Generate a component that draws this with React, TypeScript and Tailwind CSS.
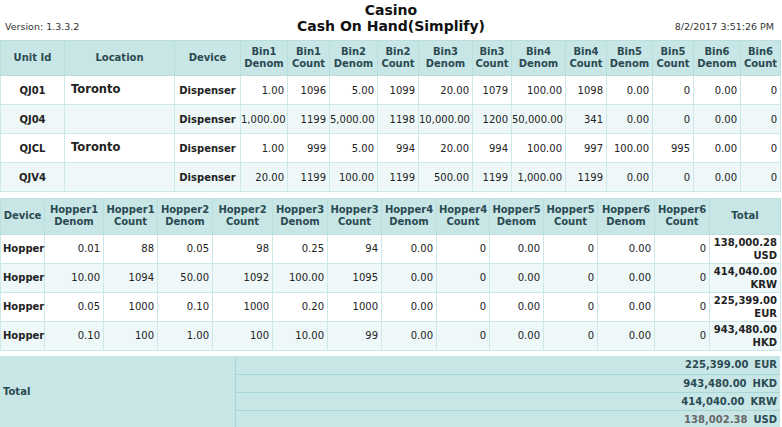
import React from "react";

const top = [
  ["QJ01", "Toronto", "1.00", "1096", "5.00", "1099", "20.00", "1079", "100.00", "1098", "0.00", "0", "0.00", "0"],
  ["QJ04", "", "1,000.00", "1199", "5,000.00", "1198", "10,000.00", "1200", "50,000.00", "341", "0.00", "0", "0.00", "0"],
  ["QJCL", "Toronto", "1.00", "999", "5.00", "994", "20.00", "994", "100.00", "997", "100.00", "995", "0.00", "0"],
  ["QJV4", "", "20.00", "1199", "100.00", "1199", "500.00", "1199", "1,000.00", "1199", "0.00", "0", "0.00", "0"],
];
const topW = [64, 110, 66, 47, 42, 48, 41, 54, 39, 54, 41, 46, 41, 47, 40];
const bot = [
  ["0.01", "88", "0.05", "98", "0.25", "94", "138,000.28", "USD"],
  ["10.00", "1094", "50.00", "1092", "100.00", "1095", "414,040.00", "KRW"],
  ["0.05", "1000", "0.10", "1000", "0.20", "1000", "225,399.00", "EUR"],
  ["0.10", "100", "1.00", "100", "10.00", "99", "943,480.00", "HKD"],
];
const botW = [44, 59, 54, 55, 60, 55, 54, 55, 53, 54, 54, 57, 55, 71];

const th = "border border-[#b8dede] bg-[#c8e6e6] text-[#2b4a52] font-bold text-center leading-[12px] px-[1px] text-[10px]";
const cell = "border border-[#cde8e8] text-[#222] text-[10px]";
const num = cell + " text-right pr-[3px]";

export default function App() {
  return (
    <div className="w-[782px] h-[427px] overflow-hidden bg-white text-[10px] text-[#222]" style={{ fontFamily: '"DejaVu Sans", Verdana, sans-serif' }}>
      <div className="relative h-[40px]">
        <div className="absolute left-[5px] top-[20px] text-[9.5px] text-[#333]">Version: 1.3.3.2</div>
        <div className="text-center font-bold text-[14px] leading-[16px] pt-[2px] text-[#111]">
          <div>Casino</div>
          <div>Cash On Hand(Simplify)</div>
        </div>
        <div className="absolute right-[8px] top-[20px] text-[9.5px] text-[#333]">8/2/2017 3:51:26 PM</div>
      </div>
      <table className="table-fixed border-collapse w-[780px]">
        <colgroup>{topW.map((w, i) => <col key={i} style={{ width: w }} />)}</colgroup>
        <thead>
          <tr className="h-[35px]">
            <th className={th}>Unit Id</th>
            <th className={th}>Location</th>
            <th className={th}>Device</th>
            {[1, 2, 3, 4, 5, 6].map(n => (
              <React.Fragment key={n}>
                <th className={th}>Bin{n}<br />Denom</th>
                <th className={th}>Bin{n}<br />Count</th>
              </React.Fragment>
            ))}
          </tr>
        </thead>
        <tbody>
          {top.map((r, i) => (
            <tr key={i} className={"h-[29px] " + (i % 2 ? "bg-[#eef8f8]" : "bg-white")}>
              <td className={cell + " text-center font-bold"}>{r[0]}</td>
              <td className={cell + " text-left pl-[6px] font-bold text-[11.5px]"}>{r[1]}</td>
              <td className={cell + " text-center font-bold"}>Dispenser</td>
              {r.slice(2).map((c, j) => <td key={j} className={num}>{c}</td>)}
              <td className={num}></td>
            </tr>
          ))}
          <tr className="h-[6px]"><td colSpan={15} className="border-t border-[#cde8e8]"></td></tr>
        </tbody>
      </table>
      <table className="table-fixed border-collapse w-[780px]">
        <colgroup>{botW.map((w, i) => <col key={i} style={{ width: w }} />)}</colgroup>
        <thead>
          <tr className="h-[36px]">
            <th className={th}>Device</th>
            {[1, 2, 3, 4, 5, 6].map(n => (
              <React.Fragment key={n}>
                <th className={th}>Hopper{n}<br />Denom</th>
                <th className={th}>Hopper{n}<br />Count</th>
              </React.Fragment>
            ))}
            <th className={th}>Total</th>
          </tr>
        </thead>
        <tbody>
          {bot.map((r, i) => (
            <tr key={i} className={"h-[29px] " + (i % 2 ? "bg-[#eef8f8]" : "bg-white")}>
              <td className={cell + " text-left pl-[2px] font-bold"}>Hopper</td>
              {r.slice(0, 6).map((c, j) => <td key={j} className={num}>{c}</td>)}
              {["0.00", "0", "0.00", "0", "0.00", "0"].map((c, j) => <td key={"z" + j} className={num}>{c}</td>)}
              <td className={num + " font-bold leading-[13px]"}>{r[6]}<br />{r[7]}</td>
            </tr>
          ))}
        </tbody>
      </table>
      <div className="mt-[5px] w-[780px] flex bg-[#c8e6e6] text-[#2b4a52] font-bold">
        <div className="w-[236px] flex items-center pl-[3px] border-r border-[#a9d6d6]">Total</div>
        <div className="flex-1 flex flex-col">
          {[["225,399.00", "EUR"], ["943,480.00", "HKD"], ["414,040.00", "KRW"], ["138,002.38", "USD"]].map(([v, c], i) => (
            <div key={i} className={"h-[18px] flex items-center justify-end pr-[3px] gap-[6px] " + (i ? "border-t border-[#a9d6d6]" : "")}>
              <span className={i === 3 ? "text-[#666]" : ""}>{v}</span><span>{c}</span>
            </div>
          ))}
        </div>
      </div>
    </div>
  );
}
